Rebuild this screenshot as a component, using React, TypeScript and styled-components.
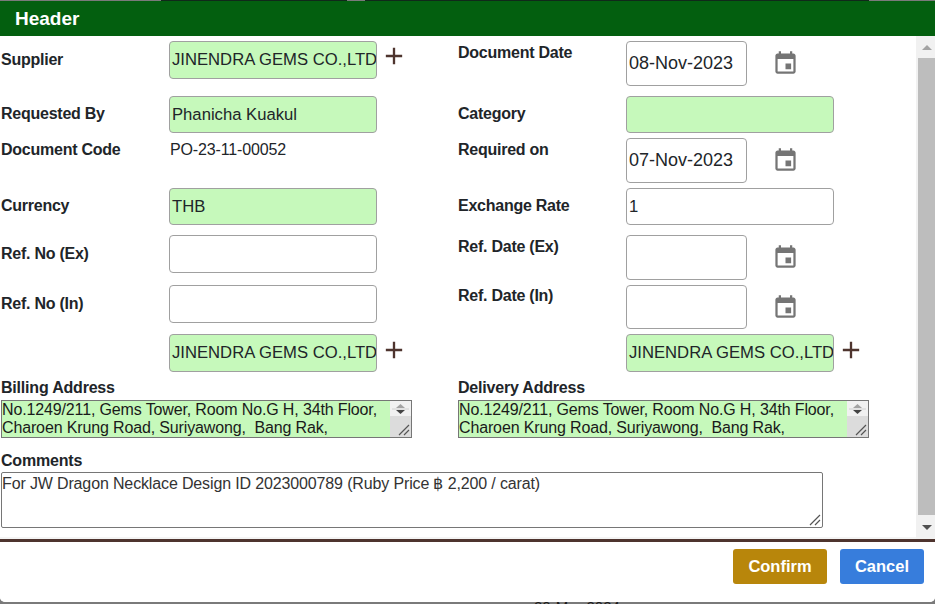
import React from "react";
import styled, { createGlobalStyle } from "styled-components";

const Global = createGlobalStyle`
  html, body { margin: 0; padding: 0; height: 100%; overflow: hidden; background: #7a7a7a; }
  #root { height: 100%; }
  * { box-sizing: border-box; }
`;

const Backdrop = styled.div`
  position: relative;
  width: 935px;
  height: 604px;
  padding: 1px 0 2px;
  background: #7a7a7a;
  overflow: hidden;
  font-family: "Liberation Sans", Arial, sans-serif;
`;
const TopEdge = styled.div<{ $x: number; $w: number }>`
  position: absolute;
  top: 0;
  left: ${(p) => p.$x}px;
  width: ${(p) => p.$w}px;
  height: 1px;
  background: #10291a;
`;
const Modal = styled.div`
  position: relative;
  height: 601px;
  display: flex;
  flex-direction: column;
  background: #fff;
  border-radius: 0 0 5px 5px;
  overflow: hidden;
`;
const Title = styled.div`
  height: 35px;
  flex: none;
  background: #035f0f;
  color: #fff;
  font-size: 19px;
  font-weight: 700;
  line-height: 35px;
  padding-left: 15px;
`;
const Body = styled.div`
  height: 503px;
  flex: none;
  display: flex;
`;
const Form = styled.div`
  flex: 1;
  padding-top: 5px;
  border-bottom: 2px solid #f4f4f4;
`;
const Row = styled.div<{ $h: number }>`
  height: ${(p) => p.$h}px;
  display: grid;
  grid-template-columns: 458px 1fr;
`;
const Cell = styled.div`
  display: flex;
  align-items: flex-start;
`;
const Label = styled.div<{ $left?: boolean; $top: number }>`
  width: ${(p) => (p.$left ? 169 : 168)}px;
  padding-left: ${(p) => (p.$left ? 1 : 0)}px;
  padding-top: ${(p) => p.$top}px;
  font-size: 16px;
  letter-spacing: -0.25px;
  line-height: 18px;
  font-weight: 700;
  color: #212529;
  white-space: nowrap;
`;
const Input = styled.div<{ $green?: boolean; $w: number; $h: number; $date?: boolean }>`
  width: ${(p) => p.$w}px;
  height: ${(p) => p.$h}px;
  flex: none;
  display: flex;
  align-items: center;
  padding-left: 2px;
  border: 1px solid #a0a0a0;
  border-radius: 4px;
  background: ${(p) => (p.$green ? "#c6f9bb" : "#fff")};
  color: #212529;
  font-size: ${(p) => (p.$date ? 18 : 16.67)}px;
  white-space: nowrap;
  overflow: hidden;
`;
const Plain = styled.div`
  padding: 3px 0 0 1px;
  font-size: 16px;
  letter-spacing: -0.14px;
  line-height: 18px;
  color: #212529;
`;
const IconButton = styled.svg<{ $ml: number; $mt: number; $size: number }>`
  width: ${(p) => p.$size}px;
  height: ${(p) => p.$size}px;
  flex: none;
  margin-left: ${(p) => p.$ml}px;
  margin-top: ${(p) => p.$mt}px;
`;
const AddressBlock = styled.div`
  height: 73px;
  display: grid;
  grid-template-columns: 458px 1fr;
`;
const AddressCol = styled.div``;
const BlockLabel = styled.div<{ $left?: boolean }>`
  padding-left: ${(p) => (p.$left ? 1 : 0)}px;
  font-size: 16px;
  letter-spacing: -0.2px;
  line-height: 18px;
  font-weight: 700;
  color: #212529;
`;
const AddressBox = styled.div<{ $left?: boolean }>`
  width: 411px;
  height: 38px;
  margin-left: ${(p) => (p.$left ? 1 : 0)}px;
  margin-top: 3px;
  display: flex;
  border: 1px solid #767676;
  background: #c6f9bb;
  overflow: hidden;
`;
const AddressText = styled.div`
  flex: 1;
  font-size: 16px;
  letter-spacing: -0.14px;
  line-height: 18px;
  color: #1a1a1a;
  white-space: nowrap;
`;
const MiniBar = styled.div`
  position: relative;
  width: 21px;
  flex: none;
  background: #dcdcdc;
`;
const MiniSpin = styled.div`
  height: 15px;
  background: #f1f1f1;
`;
const ResizeGrip = styled.svg`
  position: absolute;
  right: 1px;
  bottom: 1px;
  width: 12px;
  height: 12px;
`;
const CommentBox = styled.div`
  position: relative;
  width: 822px;
  height: 56px;
  margin: 2px 0 0 1px;
  padding: 2px 0 0 0;
  border: 1px solid #767676;
  border-radius: 2px;
  font-size: 16px;
  letter-spacing: -0.14px;
  line-height: 18px;
  color: #333;
  white-space: nowrap;
`;
const Scrollbar = styled.div`
  width: 19px;
  flex: none;
  display: flex;
  flex-direction: column;
  background: #f1f1f1;
`;
const ScrollButton = styled.div<{ $h: number }>`
  height: ${(p) => p.$h}px;
  flex: none;
  display: flex;
  align-items: center;
  justify-content: center;
  padding-left: 2px;
`;
const Arrow = styled.div<{ $up?: boolean }>`
  width: 0;
  height: 0;
  border-left: 5px solid transparent;
  border-right: 5px solid transparent;
  ${(p) =>
    p.$up
      ? "border-bottom: 5px solid #a3a3a3;"
      : "border-top: 5px solid #505050;"}
`;
const Thumb = styled.div`
  flex: 1;
  margin-left: 2px;
  background: #bdbdbd;
`;
const Footer = styled.div`
  flex: 1;
  display: flex;
  justify-content: flex-end;
  align-items: flex-start;
  gap: 13px;
  padding: 7px 11px 0 0;
  border-top: 3px solid #4e342e;
  background: #fff;
`;
const Button = styled.button<{ $bg: string; $w: number }>`
  width: ${(p) => p.$w}px;
  height: 35px;
  border: 0;
  border-radius: 3px;
  background: ${(p) => p.$bg};
  color: #fff;
  font-family: inherit;
  font-size: 16.5px;
  font-weight: 700;
`;
const PeekText = styled.div`
  position: absolute;
  left: 534px;
  top: 599px;
  font-size: 15px;
  line-height: 16px;
  color: #1a1a1a;
`;

const Plus = ({ ml, mt }: { ml: number; mt: number }) => (
  <IconButton $size={28} $ml={ml} $mt={mt} viewBox="0 0 24 24" fill="#4e342e">
    <path d="M19 13h-6v6h-2v-6H5v-2h6V5h2v6h6v2z" />
  </IconButton>
);
const Cal = () => (
  <IconButton $size={27} $ml={25} $mt={9} viewBox="0 0 24 24" fill="#757575">
    <path d="M17 12h-5v5h5v-5zM16 1v2H8V1H6v2H5c-1.11 0-1.99.9-1.99 2L3 19c0 1.1.89 2 2 2h14c1.1 0 2-.9 2-2V5c0-1.1-.9-2-2-2h-1V1h-2zm3 18H5V8h14v11z" />
  </IconButton>
);
const Grip = () => (
  <ResizeGrip viewBox="0 0 12 12" stroke="#555" strokeWidth="1.2">
    <path d="M1 11 L11 1 M6 11 L11 6" />
  </ResizeGrip>
);
const ADDRESS = ["No.1249/211, Gems Tower, Room No.G H, 34th Floor,", "Charoen Krung Road, Suriyawong,\u00a0 Bang Rak,"];
const Address = ({ left }: { left?: boolean }) => (
  <AddressBox $left={left}>
    <AddressText>
      {ADDRESS.map((l) => (
        <div key={l}>{l}</div>
      ))}
    </AddressText>
    <MiniBar>
      <MiniSpin>
        <svg width="21" height="15" viewBox="0 0 21 15">
          <path d="M10.5 3 L15 7 H6 Z" fill="#a3a3a3" />
          <path d="M2 8 H19" stroke="#d0d0d0" />
          <path d="M6 9 H15 L10.5 13 Z" fill="#444" />
        </svg>
      </MiniSpin>
      <Grip />
    </MiniBar>
  </AddressBox>
);

export default function App() {
  return (
    <Backdrop>
      <Global />
      <TopEdge $x={161} $w={186} />
      <TopEdge $x={365} $w={504} />
      <PeekText>20-Mar-2024</PeekText>
      <Modal>
        <Title>Header</Title>
        <Body>
          <Form>
            <Row $h={55}>
              <Cell>
                <Label $left $top={10}>Supplier</Label>
                <Input $green $w={208} $h={38}>JINENDRA GEMS CO.,LTD</Input>
                <Plus ml={3} mt={1} />
              </Cell>
              <Cell>
                <Label $top={3}>Document Date</Label>
                <Input $date $w={121} $h={45}>08-Nov-2023</Input>
                <Cal />
              </Cell>
            </Row>
            <Row $h={42}>
              <Cell>
                <Label $left $top={9}>Requested By</Label>
                <Input $green $w={208} $h={37}>Phanicha Kuakul</Input>
              </Cell>
              <Cell>
                <Label $top={9}>Category</Label>
                <Input $green $w={208} $h={37} />
              </Cell>
            </Row>
            <Row $h={50}>
              <Cell>
                <Label $left $top={3}>Document Code</Label>
                <Plain>PO-23-11-00052</Plain>
              </Cell>
              <Cell>
                <Label $top={3}>Required on</Label>
                <Input $date $w={121} $h={45}>07-Nov-2023</Input>
                <Cal />
              </Cell>
            </Row>
            <Row $h={47}>
              <Cell>
                <Label $left $top={9}>Currency</Label>
                <Input $green $w={208} $h={37}>THB</Input>
              </Cell>
              <Cell>
                <Label $top={9}>Exchange Rate</Label>
                <Input $w={208} $h={37}>1</Input>
              </Cell>
            </Row>
            <Row $h={50}>
              <Cell>
                <Label $left $top={10}>Ref. No (Ex)</Label>
                <Input $w={208} $h={38} />
              </Cell>
              <Cell>
                <Label $top={3}>Ref. Date (Ex)</Label>
                <Input $w={121} $h={45} />
                <Cal />
              </Cell>
            </Row>
            <Row $h={49}>
              <Cell>
                <Label $left $top={10}>Ref. No (In)</Label>
                <Input $w={208} $h={38} />
              </Cell>
              <Cell>
                <Label $top={2}>Ref. Date (In)</Label>
                <Input $w={121} $h={44} />
                <Cal />
              </Cell>
            </Row>
            <Row $h={45}>
              <Cell>
                <Label $left $top={0} />
                <Input $green $w={208} $h={38}>JINENDRA GEMS CO.,LTD</Input>
                <Plus ml={3} mt={2} />
              </Cell>
              <Cell>
                <Label $top={0} />
                <Input $green $w={208} $h={38}>JINENDRA GEMS CO.,LTD</Input>
                <Plus ml={3} mt={2} />
              </Cell>
            </Row>
            <AddressBlock>
              <AddressCol>
                <BlockLabel $left>Billing Address</BlockLabel>
                <Address left />
              </AddressCol>
              <AddressCol>
                <BlockLabel>Delivery Address</BlockLabel>
                <Address />
              </AddressCol>
            </AddressBlock>
            <BlockLabel $left>Comments</BlockLabel>
            <CommentBox>
              For JW Dragon Necklace Design ID 2023000789 (Ruby Price ฿ 2,200 / carat)
              <Grip />
            </CommentBox>
          </Form>
          <Scrollbar>
            <ScrollButton $h={22}><Arrow $up /></ScrollButton>
            <Thumb />
            <ScrollButton $h={24}><Arrow /></ScrollButton>
          </Scrollbar>
        </Body>
        <Footer>
          <Button $bg="#b8860b" $w={94}>Confirm</Button>
          <Button $bg="#377ddc" $w={84}>Cancel</Button>
        </Footer>
      </Modal>
    </Backdrop>
  );
}
